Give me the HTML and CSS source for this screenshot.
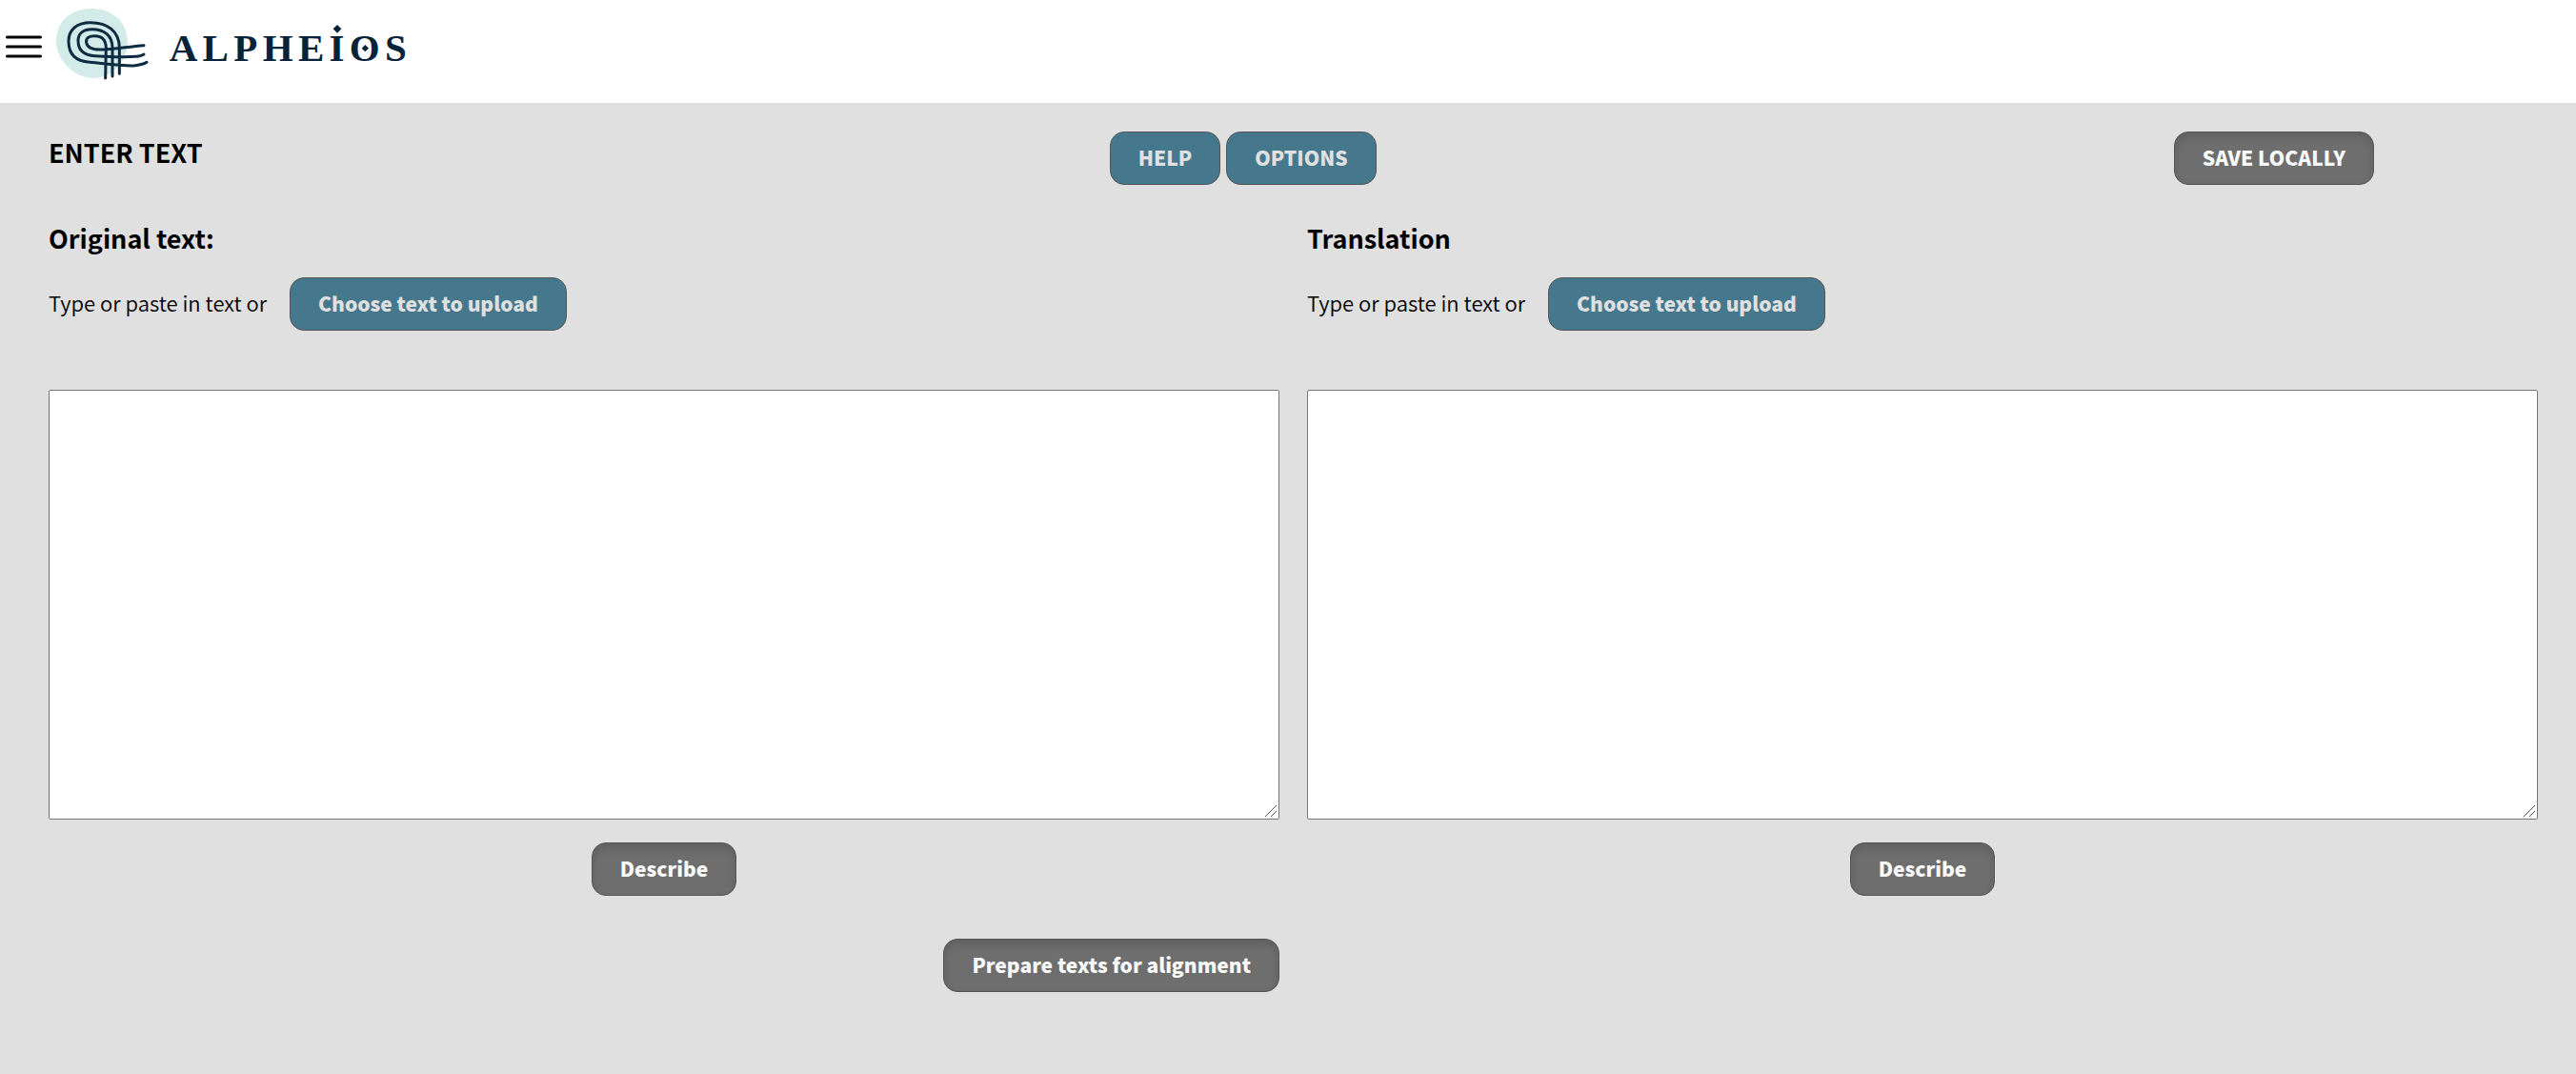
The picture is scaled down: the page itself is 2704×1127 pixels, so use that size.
FILE: index.html
```html
<!DOCTYPE html>
<html lang="en">
<head>
<meta charset="utf-8">
<title>Alpheios</title>
<meta name="viewport" content="width=device-width, initial-scale=1">
<link rel="stylesheet" href="styles.css">
</head>
<body>
<header class="header">
  <button class="menu" type="button" aria-label="Menu">
    <svg width="38" height="24" viewBox="0 0 38 24" aria-hidden="true"><path d="M1.500 2H36.500M1.500 12H36.500M1.500 22H36.500"/></svg>
  </button>
  <a class="brand" href="#" aria-label="Alpheios">
    <svg width="380" height="108" viewBox="174 0 1140 324" aria-hidden="true">
      <path class="blob" d="M290 27C355 27 402 70 402 135C402 195 350 246 292 246C235 246 177 190 177 130C177 65 225 27 290 27Z"/>
      <g class="yarn">
        <path d="M376 232V150C376 98 338 71 285 71C240 71 216 95 216 130C216 172 240 193 282 196C330 200 400 210 427 206Q452 203 462 196"/>
        <path d="M354 240V150C354 112 328 92 290 92C262 92 246 105 246 128C246 160 265 174 300 176C350 179 400 181 428 178Q446 176 453 171"/>
        <path d="M332 246L334 152C334 125 320 113 298 113C280 113 270 120 272 134C275 150 290 156 315 156C360 156 400 147 453 143"/>
      </g>
      <text class="wordmark" x="533" y="193">ALPHEIOS</text>
      <path class="gem" d="M1062 78L1075 91L1062 104L1049 91ZM1150 141L1161 152L1150 163L1139 152Z"/>
    </svg>
  </a>
</header>
<main class="main">
  <div class="toolbar">
    <h1 class="heading">ENTER TEXT</h1>
    <div class="actions">
      <button class="btn" type="button">HELP</button>
      <button class="btn" type="button">OPTIONS</button>
    </div>
    <div class="actions">
      <button class="btn btn-muted" type="button">SAVE LOCALLY</button>
    </div>
  </div>
  <div class="editors">
    <section class="editor">
      <h2 class="heading"><label for="original">Original text:</label></h2>
      <div class="upload">
        <span>Type or paste in text or</span>
        <button class="btn" type="button">Choose text to upload</button>
      </div>
      <textarea class="text" id="original"></textarea>
      <button class="btn btn-muted describe" type="button">Describe</button>
    </section>
    <section class="editor">
      <h2 class="heading"><label for="translation">Translation</label></h2>
      <div class="upload">
        <span>Type or paste in text or</span>
        <button class="btn" type="button">Choose text to upload</button>
      </div>
      <textarea class="text" id="translation"></textarea>
      <button class="btn btn-muted describe" type="button">Describe</button>
    </section>
    <button class="btn btn-muted prepare" type="button">Prepare texts for alignment</button>
  </div>
</main>
</body>
</html>
```
FILE: styles.css
```css
* {
  box-sizing: border-box;
}

body {
  margin: 0;
  min-height: 100vh;
  background: #e0e0e0;
  color: #000;
  font-family: "Noto Sans CJK SC", sans-serif;
  font-size: 22px;
  font-weight: 350;
  line-height: 32px;
}

.header {
  display: flex;
  align-items: flex-start;
  background: #fff;
}

.menu {
  width: 58px;
  padding: 37px 14px 0 6px;
  border: 0;
  background: none;
  line-height: 0;
  cursor: pointer;
}

.menu path {
  stroke: #000;
  stroke-width: 3;
  stroke-linecap: round;
}

.brand svg {
  display: block;
}

.blob {
  fill: #d3ecea;
}

.yarn {
  fill: none;
  stroke: #0d2c42;
  stroke-width: 9;
  stroke-linecap: round;
}

.wordmark {
  fill: #06233a;
  font: bold 123px "Liberation Serif", serif;
  letter-spacing: 16px;
}

.gem {
  fill: #06233a;
}

.main {
  padding: 30px 40px 40px 51px;
}

.toolbar {
  display: grid;
  grid-template-columns: 17fr 61fr 21fr;
}

.heading {
  margin: 0;
  font-size: 27px;
  line-height: 44px;
  font-weight: 700;
}

.actions {
  display: flex;
  justify-content: center;
  gap: 6px;
}

.btn {
  height: 56px;
  padding: 0 29px 2px;
  border: 1px solid #555;
  border-radius: 15px;
  background: #46788d;
  color: #e0e0e0;
  font: 900 21px/32px "Noto Sans CJK SC", sans-serif;
  white-space: nowrap;
  cursor: pointer;
}

.btn-muted {
  background: #6e6e6e;
  box-shadow: inset 0 5px 10px rgba(0, 0, 0, 0.13);
  color: #fafafa;
}

.editors {
  display: grid;
  grid-template-columns: 1fr 1fr;
  column-gap: 29px;
  row-gap: 45px;
  margin-top: 34px;
}

.editor {
  display: flex;
  flex-direction: column;
}

.upload {
  display: flex;
  align-items: baseline;
  gap: 24px;
  margin: 19px 0 62px;
}

.text {
  display: block;
  width: 100%;
  height: 451px;
  padding: 16px;
  border: 1px solid #767676;
  border-radius: 2px;
  background: #fff;
  font: inherit;
  resize: both;
}

.text::-webkit-resizer {
  background: url("data:image/svg+xml,%3Csvg xmlns='http://www.w3.org/2000/svg' width='15' height='15'%3E%3Cpath d='M1 13L13 1M7 13L13 7' stroke='%23555'/%3E%3C/svg%3E") no-repeat right bottom;
}

.describe {
  align-self: center;
  margin-top: 24px;
}

.prepare {
  justify-self: end;
}
```
